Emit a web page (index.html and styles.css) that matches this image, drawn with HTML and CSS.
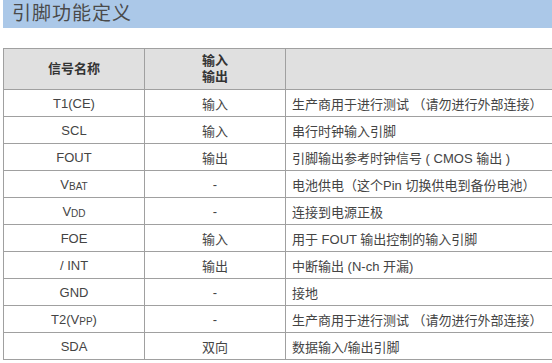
FILE: index.html
```html
<!DOCTYPE html>
<html lang="zh-CN">
<head>
    <meta charset="UTF-8">
    <title>引脚功能定义</title>
    <link rel="stylesheet" href="styles.css">
</head>
<body>
    <h2 class="section-title">引脚功能定义</h2>

    <table class="pin-table">
        <thead>
            <tr>
                <th class="col-name">信号名称</th>
                <th class="col-dir">输入<br>输出</th>
                <th class="col-desc"></th>
            </tr>
        </thead>
        <tbody>
            <tr><td>T1(CE)</td><td>输入</td><td class="desc">生产商用于进行测试 （请勿进行外部连接）</td></tr>
            <tr><td>SCL</td><td>输入</td><td class="desc">串行时钟输入引脚</td></tr>
            <tr><td>FOUT</td><td>输出</td><td class="desc">引脚输出参考时钟信号 ( CMOS 输出 )</td></tr>
            <tr><td>V<sub>BAT</sub></td><td>-</td><td class="desc">电池供电（这个Pin 切换供电到备份电池）</td></tr>
            <tr><td>V<sub>DD</sub></td><td>-</td><td class="desc">连接到电源正极</td></tr>
            <tr><td>FOE</td><td>输入</td><td class="desc">用于 FOUT 输出控制的输入引脚</td></tr>
            <tr><td>/ INT</td><td>输出</td><td class="desc">中断输出 (N-ch 开漏)</td></tr>
            <tr><td>GND</td><td>-</td><td class="desc">接地</td></tr>
            <tr><td>T2(V<sub>PP</sub>)</td><td>-</td><td class="desc">生产商用于进行测试 （请勿进行外部连接）</td></tr>
            <tr><td>SDA</td><td>双向</td><td class="desc">数据输入/输出引脚</td></tr>
        </tbody>
    </table>
</body>
</html>
```

FILE: styles.css
```css
* {
    margin: 0;
    padding: 0;
    box-sizing: border-box;
}

body {
    background-color: #fff;
    color: #444;
    font-family: "Liberation Sans", "Noto Sans CJK SC", sans-serif;
    font-size: 13px;
    padding: 0 0 0 3px;
}

.section-title {
    background-color: #abc8e8;
    color: #4a4a4a;
    font-size: 19px;
    font-weight: normal;
    height: 28px;
    line-height: 28px;
    padding-left: 9px;
    letter-spacing: 1px;
    margin-bottom: 20px;
}

.pin-table {
    border-collapse: collapse;
    width: 100%;
    table-layout: fixed;
}

.pin-table th,
.pin-table td {
    border: 1px solid #a0a0a0;
    text-align: center;
    font-weight: normal;
}

/* 右侧边框在截图之外 */
.pin-table tr > :last-child {
    border-right: none;
}

.pin-table th {
    background-color: #e0e0e0;
    font-weight: bold;
    color: #333;
    height: 41px;
    line-height: 16px;
}

.pin-table td {
    height: 27px;
}

.col-name,
.col-dir {
    width: 141px;
}

.pin-table td.desc {
    text-align: left;
    padding-left: 6px;
}

sub {
    font-size: 10px;
    vertical-align: -1px;
}
```
